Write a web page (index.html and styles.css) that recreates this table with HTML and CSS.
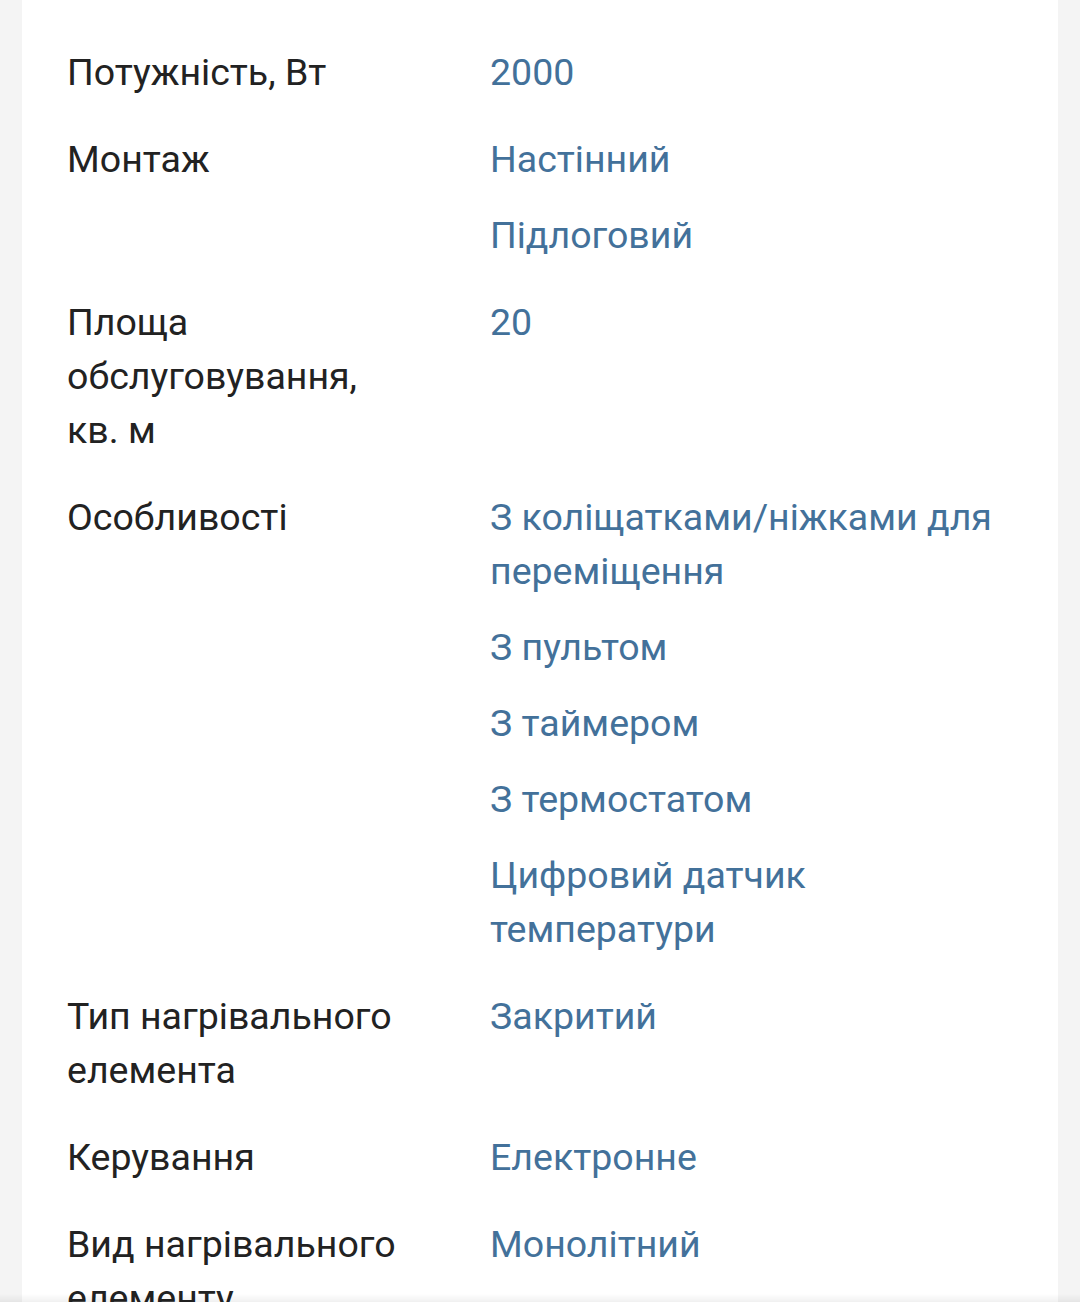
FILE: index.html
```html
<!DOCTYPE html>
<html lang="uk">
<head>
<meta charset="utf-8">
<title>Характеристики</title>
<link rel="stylesheet" href="styles.css">
</head>
<body>
<main class="card">
  <dl class="specs">
    <div class="row">
      <dt class="label">Потужність, Вт</dt>
      <dd class="values"><a class="value">2000</a></dd>
    </div>
    <div class="row">
      <dt class="label">Монтаж</dt>
      <dd class="values"><a class="value">Настінний</a><a class="value">Підлоговий</a></dd>
    </div>
    <div class="row">
      <dt class="label">Площа обслуговування, кв.&nbsp;м</dt>
      <dd class="values"><a class="value">20</a></dd>
    </div>
    <div class="row">
      <dt class="label">Особливості</dt>
      <dd class="values">
        <a class="value">З коліщатками/ніжками для переміщення</a>
        <a class="value">З пультом</a>
        <a class="value">З таймером</a>
        <a class="value">З термостатом</a>
        <a class="value">Цифровий датчик температури</a>
      </dd>
    </div>
    <div class="row">
      <dt class="label">Тип нагрівального елемента</dt>
      <dd class="values"><a class="value">Закритий</a></dd>
    </div>
    <div class="row">
      <dt class="label">Керування</dt>
      <dd class="values"><a class="value">Електронне</a></dd>
    </div>
    <div class="row">
      <dt class="label">Вид нагрівального елементу</dt>
      <dd class="values"><a class="value">Монолітний</a></dd>
    </div>
  </dl>
</main>
<div class="bottom-shade"></div>
</body>
</html>
```

FILE: styles.css
```css
html, body {
  margin: 0;
  padding: 0;
}
body {
  background: #f4f4f4;
  font-family: Roboto, "Noto Sans", sans-serif;
  font-size: 37.5px;
  line-height: 54px;
  color: #222222;
  overflow: hidden;
  height: 1302px;
}
.card {
  margin: 0 22px;
  background: #ffffff;
  padding: 45px 45px 60px;
  min-height: 1302px;
  box-sizing: border-box;
}
.specs {
  margin: 0;
  display: flex;
  flex-direction: column;
  gap: 33px;
}
.row {
  display: grid;
  grid-template-columns: 360px 1fr;
  column-gap: 63px;
}
.label {
  margin: 0;
}
.values {
  margin: 0;
  display: flex;
  flex-direction: column;
  gap: 22px;
}
.value {
  color: #43719a;
  text-decoration: none;
}
.bottom-shade {
  position: fixed;
  left: 0;
  right: 0;
  bottom: 0;
  height: 8px;
  background: linear-gradient(to bottom, rgba(0,0,0,0), rgba(0,0,0,0.06));
}
```
